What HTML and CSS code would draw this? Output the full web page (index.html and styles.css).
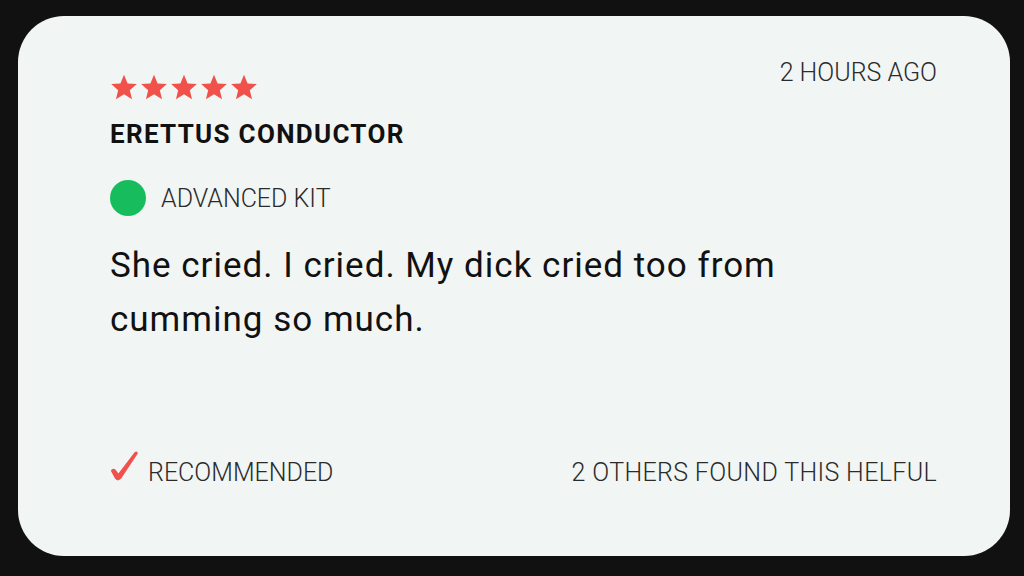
FILE: index.html
```html
<!DOCTYPE html>
<html lang="en">
<head>
  <meta charset="UTF-8">
  <title>Review</title>
  <meta name="viewport" content="width=device-width, initial-scale=1.0">
  <link rel="stylesheet" href="styles.css">
</head>
<body>

<div class="review-card">
  <div class="review-head">
    <div class="review-meta">
      <div class="stars">
        <svg class="star" viewBox="0 0 24 24"><path d="M12 1.5l3.1 7.4 7.9.6-6 5.2 1.9 7.8L12 18.3l-6.9 4.2 1.9-7.8-6-5.2 7.9-.6z"/></svg>
        <svg class="star" viewBox="0 0 24 24"><path d="M12 1.5l3.1 7.4 7.9.6-6 5.2 1.9 7.8L12 18.3l-6.9 4.2 1.9-7.8-6-5.2 7.9-.6z"/></svg>
        <svg class="star" viewBox="0 0 24 24"><path d="M12 1.5l3.1 7.4 7.9.6-6 5.2 1.9 7.8L12 18.3l-6.9 4.2 1.9-7.8-6-5.2 7.9-.6z"/></svg>
        <svg class="star" viewBox="0 0 24 24"><path d="M12 1.5l3.1 7.4 7.9.6-6 5.2 1.9 7.8L12 18.3l-6.9 4.2 1.9-7.8-6-5.2 7.9-.6z"/></svg>
        <svg class="star" viewBox="0 0 24 24"><path d="M12 1.5l3.1 7.4 7.9.6-6 5.2 1.9 7.8L12 18.3l-6.9 4.2 1.9-7.8-6-5.2 7.9-.6z"/></svg>
      </div>
      <h2 class="reviewer">ERETTUS CONDUCTOR</h2>
      <div class="kit">
        <span class="kit-dot"></span>
        <span>ADVANCED KIT</span>
      </div>
    </div>
    <div class="time">2 HOURS AGO</div>
  </div>

  <p class="review-text">She cried. I cried. My dick cried too from cumming so much.</p>

  <div class="review-foot">
    <div class="recommended">
      <!-- brush-style check, thick at the bottom and thin at the tip -->
      <svg class="check" viewBox="0 0 28 30"><path d="M0.8 19.8 Q2.6 16.4 5.4 18.6 L8.4 22.6 L24.6 1.2 Q27.6 -0.6 27.8 2.6 L11.2 27.6 Q7.6 31.2 5 27.6 Z"/></svg>
      <span>RECOMMENDED</span>
    </div>
    <div class="helpful">2 OTHERS FOUND THIS HELFUL</div>
  </div>
</div>

</body>
</html>
```

FILE: styles.css
```css
:root {
  --page: #111111;
  --card: #f1f5f4;
  --text: #111111;
  --muted: #2b2b2b;
  --red: #f0514a;
  --green: #17bd5c;
}

body {
  margin: 0;
  height: 576px;
  background: var(--page);
  font-family: Roboto, 'Liberation Sans', sans-serif;
  color: var(--text);
  padding: 16px 14px 20px 18px;
  box-sizing: border-box;
}

.review-card {
  height: 100%;
  background: var(--card);
  border-radius: 46px;
  padding: 47px 73px 0 92px;
  box-sizing: border-box;
  display: flex;
  flex-direction: column;
}

.review-head {
  display: flex;
  justify-content: space-between;
  align-items: flex-start;
}

.stars {
  display: flex;
  gap: 2px;
  height: 28px;
  margin-top: 10px;
}

.star {
  width: 28px;
  height: 28px;
  fill: var(--red);
}

.reviewer {
  margin: 17px 0 0;
  font-size: 26px;
  font-weight: 700;
  line-height: 32px;
  letter-spacing: 1.3px;
}

.kit {
  display: flex;
  align-items: center;
  gap: 15px;
  margin-top: 30px;
  font-size: 25px;
  font-weight: 300;
  color: var(--muted);
}

.kit-dot {
  width: 36px;
  height: 36px;
  border-radius: 50%;
  background: var(--green);
}

.time {
  margin-top: -5px;
  font-size: 25px;
  font-weight: 300;
  color: var(--muted);
  line-height: 30px;
}

.review-text {
  margin: 23px 0 0;
  font-size: 35px;
  line-height: 54px;
  letter-spacing: 1px;
  max-width: 720px;
}

.review-foot {
  margin-top: auto;
  margin-bottom: 63px;
  display: flex;
  justify-content: space-between;
  align-items: center;
  font-size: 25px;
  font-weight: 300;
  color: var(--muted);
}

.recommended {
  display: flex;
  align-items: center;
  gap: 10px;
}

.check {
  width: 28px;
  height: 30px;
  margin-bottom: 12px;
  fill: var(--red);
}

.helpful {
  letter-spacing: 0.35px;
}
```
